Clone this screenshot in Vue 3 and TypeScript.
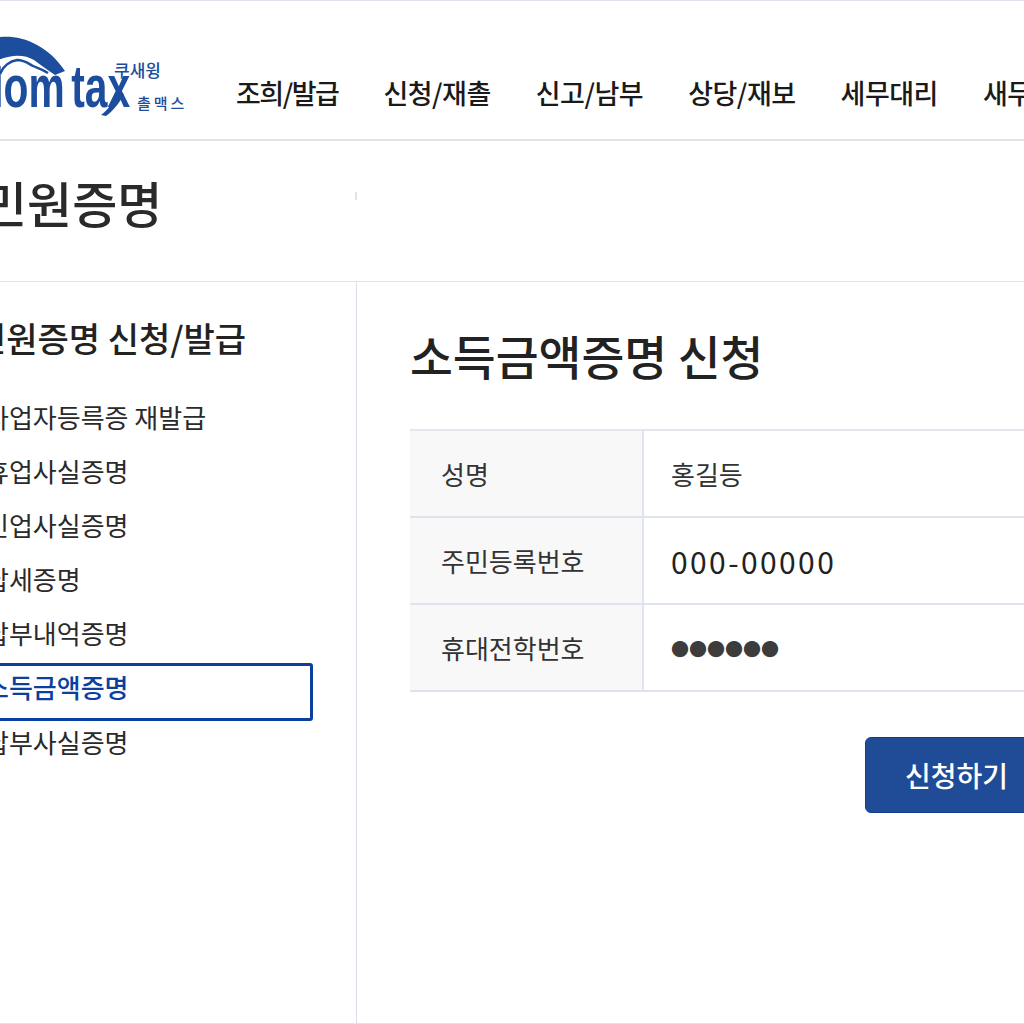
<script setup lang="ts">
const navItems = ["조희/발급", "신청/재촐", "신고/남부", "상당/재보", "세무대리", "새무서"];

const sideItems = [
  { label: "사업자등륵증 재발급", active: false },
  { label: "휴업사실증명", active: false },
  { label: "민업사실증명", active: false },
  { label: "납세증명", active: false },
  { label: "납부내억증명", active: false },
  { label: "소득금액증명", active: true },
  { label: "납부사실증명", active: false },
];

const rows = [
  { label: "성명", value: "홍길등", kind: "name" },
  { label: "주민등록번호", value: "000-00000", kind: "num" },
  { label: "휴대전학번호", value: "●●●●●●", kind: "dots" },
];
</script>

<template>
  <div class="page">
    <header class="top">
      <div class="logo">
        <svg class="logo-mark" width="140" height="125" viewBox="0 0 140 125">
          <!-- roof arc -->
          <path
            d="M-6 38 C16 33 46 42 65 71 L55 75 C48 70 42 66 34 60 C24 54 10 54 -6 62 Z"
            fill="#1d4e9e"
          />
          <!-- thin cloud line under the arc -->
          <path
            d="M0 74 C3 66 10 61 17 60 C25 60 29 64 33 66 C37 68 42 69 48 73"
            fill="none"
            stroke="#1d4e9e"
            stroke-width="2.5"
          />
          <!-- tail of the x -->
          <path d="M118 93 C113 102 108 110 101 115 L106 116 C114 110 120 102 124 94 Z" fill="#1d4e9e" />
        </svg>
        <span class="logo-word">Hom tax</span>
        <span class="logo-top">쿠새윙</span>
        <span class="logo-bottom">촐맥스</span>
      </div>
      <nav class="nav">
        <a v-for="item in navItems" :key="item" class="nav-item">{{ item }}</a>
      </nav>
    </header>

    <div class="title-row">
      <h1 class="page-title">민원증명</h1>
      <span class="tick"></span>
    </div>

    <div class="body">
      <aside class="side">
        <h2 class="side-title">민원증명 신청/발급</h2>
        <ul class="side-list">
          <li
            v-for="item in sideItems"
            :key="item.label"
            class="side-item"
            :class="{ active: item.active }"
          >
            {{ item.label }}
          </li>
        </ul>
      </aside>

      <main class="main">
        <h2 class="main-title">소득금액증명 신청</h2>
        <div class="table">
          <div v-for="row in rows" :key="row.label" class="row">
            <div class="cell-label">{{ row.label }}</div>
            <div class="cell-value" :class="row.kind">{{ row.value }}</div>
          </div>
        </div>
        <div class="actions">
          <button class="submit">신청하기</button>
        </div>
      </main>
    </div>
  </div>
</template>

<style>
html,
body {
  margin: 0;
  background: #fff;
}
</style>

<style scoped>
.page {
  width: 1024px;
  height: 1024px;
  overflow: hidden;
  display: flex;
  flex-direction: column;
  box-sizing: border-box;
  background: #fff;
  color: #222;
  border-top: 1px solid #dfe4ec;
  border-bottom: 1px solid #dfe4ec;
  font-family: "Noto Sans CJK KR", "Noto Sans", sans-serif;
}

.top {
  height: 138px;
  flex: none;
  display: flex;
  border-bottom: 2px solid #e0e3e8;
}

.logo {
  position: relative;
  width: 236px;
  height: 138px;
  flex: none;
}

.logo-mark {
  position: absolute;
  left: 0;
  top: -1px;
}

.logo-word {
  position: absolute;
  left: -26px;
  top: 64px;
  font-family: "Liberation Sans", sans-serif;
  font-size: 60px;
  line-height: 44px;
  font-weight: 700;
  word-spacing: -7px;
  color: #1d4e9e;
  white-space: nowrap;
  transform: scaleX(0.68);
  transform-origin: left center;
}

.logo-top {
  position: absolute;
  left: 114px;
  top: 59px;
  font-size: 17px;
  line-height: 20px;
  font-weight: 500;
  color: #1d4e9e;
  white-space: nowrap;
}

.logo-bottom {
  position: absolute;
  left: 137px;
  top: 92px;
  font-size: 15px;
  line-height: 20px;
  font-weight: 500;
  letter-spacing: 3px;
  color: #1d4e9e;
  white-space: nowrap;
}

.nav {
  display: flex;
  gap: 45px;
  height: 40px;
  white-space: nowrap;
  padding-top: 72px;
}

.nav-item {
  font-size: 27px;
  line-height: 40px;
  font-weight: 500;
  letter-spacing: -0.5px;
  color: #1a1a1a;
}

.nav-item:first-child {
  letter-spacing: -1.5px;
}

.title-row {
  height: 140px;
  flex: none;
  display: flex;
  align-items: center;
  position: relative;
  border-bottom: 1px solid #dfe2e8;
}

.page-title {
  margin: -18px 0 0 -18px;
  font-size: 49px;
  line-height: 60px;
  font-weight: 500;
  color: #2a2a2a;
  white-space: nowrap;
}

.tick {
  position: absolute;
  left: 355px;
  top: 51px;
  width: 2px;
  height: 8px;
  background: #dfe4ec;
}

.body {
  flex: 1;
  display: flex;
  min-height: 0;
}

.side {
  width: 357px;
  flex: none;
  box-sizing: border-box;
  border-right: 1px solid #d9deea;
  padding-top: 32px;
}

.side-title {
  margin: 0 0 0 -25px;
  font-size: 34px;
  line-height: 48px;
  font-weight: 500;
  color: #222;
  white-space: nowrap;
}

.side-list {
  list-style: none;
  margin: 27px 0 0;
  padding: 0;
  display: flex;
  flex-direction: column;
}

.side-item {
  height: 54.2px;
  display: flex;
  align-items: center;
  margin-left: -30px;
  padding-left: 15px;
  width: 343px;
  box-sizing: border-box;
  font-size: 26px;
  color: #2a2a2a;
  white-space: nowrap;
}

.side-item.active {
  height: 58px;
  margin: 3px 0 -7px -30px;
  border: 3px solid #0b3fa0;
  border-radius: 3px;
  padding: 0 0 10px 12px;
  color: #0b3fa0;
  font-weight: 500;
}

.main {
  flex: 1;
  min-width: 0;
  padding: 40px 0 0 53px;
}

.main-title {
  margin: 0;
  font-size: 46.6px;
  line-height: 66px;
  font-weight: 500;
  color: #222;
  white-space: nowrap;
}

.table {
  margin-top: 41px;
  width: 700px;
  border-top: 2px solid #e3e6ec;
}

.row {
  display: flex;
  height: 85px;
  border-bottom: 2px solid #dfe3ec;
}

.cell-label {
  width: 234px;
  flex: none;
  box-sizing: border-box;
  padding-left: 31px;
  display: flex;
  align-items: center;
  background: #f8f8f9;
  border-right: 2px solid #e1e4ec;
  font-size: 26px;
  color: #333;
}

.cell-value {
  flex: 1;
  padding-left: 27px;
  display: flex;
  align-items: center;
  font-size: 26px;
  color: #333;
}

.cell-value.num {
  font-size: 30px;
  letter-spacing: 2.4px;
  color: #222;
}

.cell-value.dots {
  font-size: 18px;
  letter-spacing: 0;
  color: #3c3c3c;
}

.actions {
  margin-top: 45px;
  padding-left: 455px;
}

.submit {
  width: 190px;
  height: 76px;
  box-sizing: border-box;
  border: 1px solid #0f3d91;
  border-radius: 6px;
  background: #1f4b97;
  color: #fff;
  font-family: inherit;
  font-size: 28px;
  font-weight: 500;
  text-align: left;
  padding: 0 0 0 39px;
}
</style>
